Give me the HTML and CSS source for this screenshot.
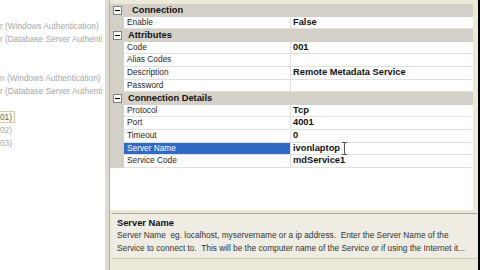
FILE: index.html
```html
<!DOCTYPE html>
<html>
<head>
<meta charset="utf-8">
<link rel="stylesheet" href="styles.css">
</head>
<body>
<div class="screen">
  <div class="tree">
    <div class="trow">r (Windows Authentication)</div>
    <div class="trow">r (Database Server Authenti</div>
    <div class="trow"></div>
    <div class="trow"></div>
    <div class="trow">n (Windows Authentication)</div>
    <div class="trow">r (Database Server Authenti</div>
    <div class="trow"></div>
    <div class="trow"><span class="focus">01)</span></div>
    <div class="trow">02)</div>
    <div class="trow">03)</div>
  </div>
  <div class="split"></div>
  <div class="main">
    <div class="grid">
      <div class="row cat"><span class="gut"><svg class="box" width="9" height="9" viewBox="0 0 9 9"><rect x="0.5" y="0.5" width="8" height="8" fill="#fff" stroke="#7f7f7f"/><line x1="2" y1="4.5" x2="7" y2="4.5" stroke="#000"/></svg></span><span class="cname first">Connection</span></div>
      <div class="row"><span class="gut"></span><span class="name">Enable</span><span class="val">False</span></div>
      <div class="row cat"><span class="gut"><svg class="box" width="9" height="9" viewBox="0 0 9 9"><rect x="0.5" y="0.5" width="8" height="8" fill="#fff" stroke="#7f7f7f"/><line x1="2" y1="4.5" x2="7" y2="4.5" stroke="#000"/></svg></span><span class="cname">Attributes</span></div>
      <div class="row"><span class="gut"></span><span class="name">Code</span><span class="val">001</span></div>
      <div class="row"><span class="gut"></span><span class="name">Alias Codes</span><span class="val"></span></div>
      <div class="row"><span class="gut"></span><span class="name">Description</span><span class="val">Remote Metadata Service</span></div>
      <div class="row"><span class="gut"></span><span class="name">Password</span><span class="val"></span></div>
      <div class="row cat"><span class="gut"><svg class="box" width="9" height="9" viewBox="0 0 9 9"><rect x="0.5" y="0.5" width="8" height="8" fill="#fff" stroke="#7f7f7f"/><line x1="2" y1="4.5" x2="7" y2="4.5" stroke="#000"/></svg></span><span class="cname">Connection Details</span></div>
      <div class="row"><span class="gut"></span><span class="name">Protocol</span><span class="val">Tcp</span></div>
      <div class="row"><span class="gut"></span><span class="name">Port</span><span class="val">4001</span></div>
      <div class="row"><span class="gut"></span><span class="name">Timeout</span><span class="val">0</span></div>
      <div class="row sel"><span class="gut"></span><span class="name">Server Name</span><span class="val">ivonlaptop<svg class="ibeam" width="5" height="13" viewBox="0 0 5 13"><path d="M0 0.5H5M2.5 0.5V12.5M0 12.5H5" stroke="#555" stroke-width="1" fill="none"/></svg></span></div>
      <div class="row"><span class="gut"></span><span class="name">Service Code</span><span class="val">mdService1</span></div>
    </div>
    <div class="desc">
      <div class="dtitle">Server Name</div>
      <div class="dtext">Server Name  eg. localhost, myservername or a ip address.  Enter the Server Name of the</div>
      <div class="dtext">Service to connect to.  This will be the computer name of the Service or if using the Internet it...</div>
    </div>
    <div class="foot"></div>
  </div>
  <div class="edge"></div>
</div>
</body>
</html>
```
FILE: styles.css
```css
html, body {
  margin: 0;
  padding: 0;
  background: #fff;
}
body {
  font-family: "Liberation Sans", Arial, sans-serif;
}
.screen {
  display: flex;
  width: 480px;
  height: 270px;
  overflow: hidden;
}
.tree {
  width: 105px;
  flex: none;
  overflow: hidden;
  padding-top: 19.5px;
  box-sizing: border-box;
  color: #a8a8a8;
  font-size: 8.3px;
  background: #fff;
}
.trow {
  height: 13px;
  line-height: 13px;
  white-space: nowrap;
}
.focus {
  display: inline-block;
  line-height: 10px;
  padding: 0 2px 0 0;
  color: #666;
  border: 1px solid #cfc9a8;
  border-left: none;
  background: #fdfbf0;
}
.split {
  width: 4px;
  flex: none;
  background: #dedbd0;
  border-right: 1px solid #b5b2a8;
}
.main {
  width: 368px;
  flex: none;
  background: #ece9d8;
  display: flex;
  flex-direction: column;
}
.grid {
  margin: 4px 5px 0 0;
  height: 206px;
  flex: none;
  background: #fff;
  display: flex;
  flex-direction: column;
}
.row {
  display: flex;
  height: 12.6px;
  flex: none;
}
.gut {
  width: 14px;
  flex: none;
  background: #d4d0c8;
  display: flex;
  align-items: center;
  justify-content: center;
}
.box {
  display: block;
}
.name {
  width: 167px;
  flex: none;
  box-sizing: border-box;
  padding-left: 3px;
  font-size: 8.3px;
  line-height: 11.6px;
  color: #262626;
  border-bottom: 1px solid #e2e1dc;
  border-right: 1px solid #e2e1dc;
  white-space: nowrap;
}
.val {
  flex: 1;
  padding-left: 2px;
  font-size: 9.3px;
  font-weight: bold;
  line-height: 11.6px;
  color: #111;
  border-bottom: 1px solid #e2e1dc;
  white-space: nowrap;
}
.cat {
  background: #d4d0c8;
}
.cname {
  padding-left: 4px;
  font-size: 9.3px;
  font-weight: bold;
  line-height: 12.6px;
  color: #111;
  white-space: nowrap;
}
.cname.first {
  padding-left: 8px;
}
.sel .name {
  background: #316ac5;
  color: #fff;
}
.ibeam {
  display: inline-block;
  vertical-align: top;
  margin-left: 2px;
  margin-top: -1px;
}
.desc {
  margin: 3px 1px 0 2px;
  height: 46px;
  flex: none;
  box-sizing: border-box;
  background: #eeece3;
  border-top: 1px solid #aaa798;
  border-bottom: 1px solid #c9c6b9;
  padding: 3px 0 0 5px;
  overflow: hidden;
}
.dtitle {
  font-size: 9.3px;
  font-weight: bold;
  line-height: 12.3px;
  color: #111;
}
.dtext {
  font-size: 8.3px;
  line-height: 12.3px;
  color: #333;
  white-space: pre;
}
.foot {
  flex: 1;
  background: #ece9d8;
}
.edge {
  width: 2px;
  flex: none;
  background: #000;
}
```
